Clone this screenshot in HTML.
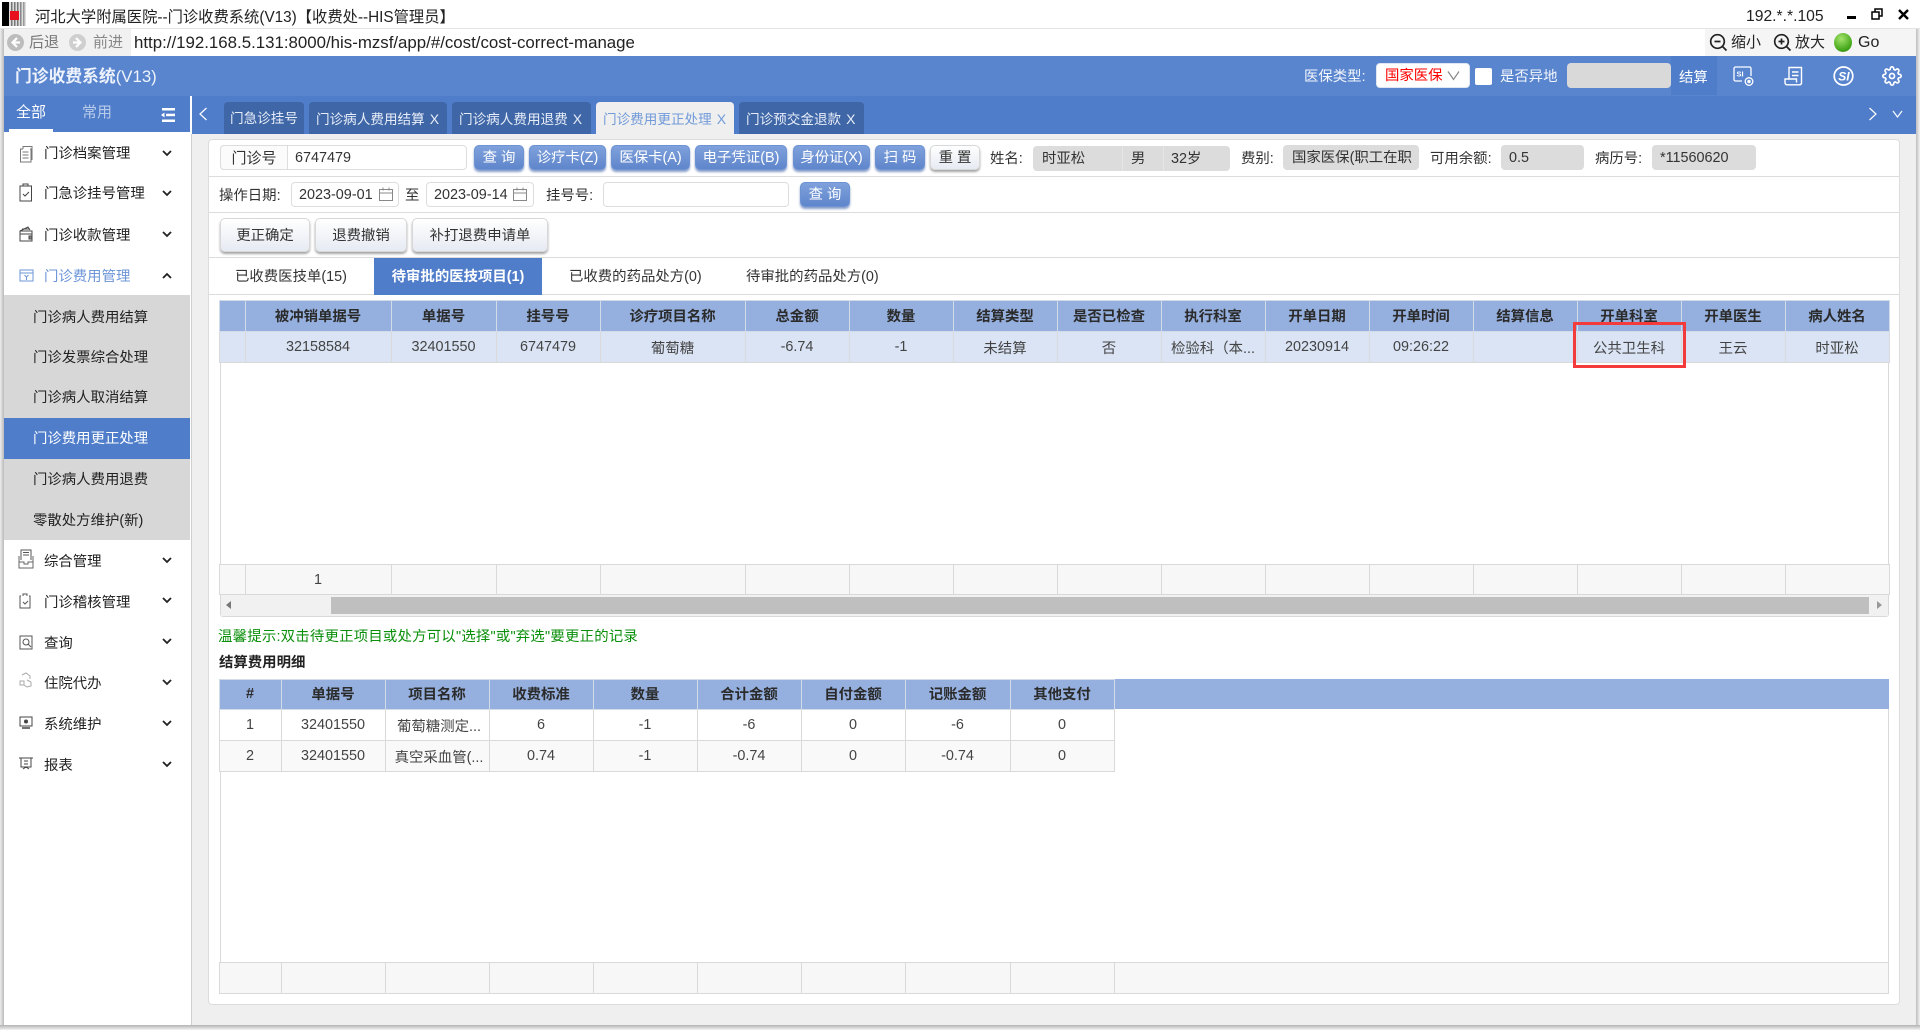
<!DOCTYPE html>
<html lang="zh-CN"><head><meta charset="utf-8"><title>门诊收费系统</title>
<style>
html,body{margin:0;padding:0;width:1920px;height:1030px;overflow:hidden;background:#fff}
body{position:relative;font-family:"Liberation Sans","Noto Sans CJK SC",sans-serif;font-size:14.4px;color:#333}
.a{position:absolute;white-space:nowrap;box-sizing:border-box}
.t{position:absolute;white-space:nowrap;height:20px;line-height:20px}
.m{color:#222}
.tab{position:absolute;top:102px;height:32px;background:#3f66a6;border-radius:4px 4px 0 0;color:#e8eef9;font-size:13.6px;line-height:34px;padding-left:7px;white-space:nowrap;box-sizing:border-box}
.tab i{font-style:normal;margin-left:5px;font-size:14px}
.btn{position:absolute;top:145px;height:25px;border-radius:5px;background:linear-gradient(#7fa1dc,#5f86cb);box-shadow:0 2px 2px rgba(70,105,170,.65);color:#fff;text-align:center;line-height:25px;white-space:nowrap;font-size:14.4px;border:1px solid #6d93d4;box-sizing:border-box}
.wbtn{position:absolute;top:145px;height:25px;border-radius:5px;background:linear-gradient(#fff,#e6eaf2);box-shadow:0 2px 2px rgba(90,90,90,.55);color:#333;text-align:center;line-height:25px;white-space:nowrap;border:1px solid #d8d8d8;box-sizing:border-box}
.inp{position:absolute;background:#fff;border:1px solid #ddd;border-radius:4px;box-sizing:border-box;height:25px;line-height:25px;white-space:nowrap}
.gray{position:absolute;background:#dcdcdc;border-radius:4px;height:25px;top:146px;line-height:26px;white-space:nowrap;box-sizing:border-box;overflow:hidden}
.hl{position:absolute;left:208px;width:1692px;height:1px;background:#dcdcdc}
table{position:absolute;border-collapse:collapse;table-layout:fixed}
td,th{border:1px solid #d9d9d9;padding:0 1px 0 0;text-align:center;overflow:hidden;white-space:nowrap;font-size:14.4px;box-sizing:border-box;color:#444;font-weight:normal}
th{background:#95b0df;color:#2b2b2b;font-weight:700;border-color:#d3dbe9;padding-bottom:2px}
td.p{padding-left:3px;padding-right:0}
</style></head><body>

<!-- window title bar -->
<svg class="a" style="left:2px;top:2px;width:24px;height:24px" viewBox="0 0 24 24"><rect width="24" height="24" fill="#ddd"/><rect x="0" width="7" height="24" fill="#000"/><rect x="9" width="1.5" height="24" fill="#777"/><rect x="12" width="1.5" height="24" fill="#777"/><rect x="15" width="1.5" height="24" fill="#777"/><rect x="18" width="1.5" height="24" fill="#888"/><rect x="21" width="1.5" height="24" fill="#999"/><rect x="8" y="9" width="9" height="9" fill="#e8101c"/></svg>
<div class="t" style="left:35px;top:8px;font-size:15.3px;color:#222">河北大学附属医院--门诊收费系统(V13)【收费处--HIS管理员】</div>
<div class="t" style="left:1746px;top:7px;font-size:15.7px;color:#222">192.*.*.105</div>
<div class="a" style="left:1847px;top:16px;width:9px;height:3px;background:#000"></div>
<svg class="a" style="left:1871px;top:8px;width:12px;height:12px" viewBox="0 0 12 12" fill="none" stroke="#000" stroke-width="1.5"><rect x="1" y="4" width="7" height="7"/><path d="M4 4V1h7v7H8"/></svg>
<svg class="a" style="left:1898px;top:9px;width:11px;height:11px" viewBox="0 0 11 11" stroke="#000" stroke-width="2.4"><path d="M1 1l9 9M10 1l-9 9"/></svg>
<div class="a" style="left:0;top:28px;width:1920px;height:1px;background:#e4e4e4"></div>

<!-- address bar -->
<div class="a" style="left:4px;top:29px;width:127px;height:27px;background:#f1f1f1"></div>
<div class="a" style="left:1705px;top:29px;width:211px;height:27px;background:#f5f5f5"></div>
<svg class="a" style="left:6px;top:33px;width:19px;height:19px" viewBox="0 0 19 19"><circle cx="9.5" cy="9.5" r="8.5" fill="#bdbdbd"/><path d="M11 5L6.5 9.5 11 14" fill="none" stroke="#fff" stroke-width="2.2"/><path d="M7 9.5h7" stroke="#fff" stroke-width="2.2"/></svg>
<div class="t" style="left:29px;top:33px;font-size:15px;color:#777">后退</div>
<svg class="a" style="left:68px;top:33px;width:19px;height:19px" viewBox="0 0 19 19"><circle cx="9.5" cy="9.5" r="8.5" fill="#cfcfcf"/><path d="M8 5l4.5 4.5L8 14" fill="none" stroke="#fff" stroke-width="2.2"/><path d="M12 9.5H5" stroke="#fff" stroke-width="2.2"/></svg>
<div class="t" style="left:93px;top:33px;font-size:15px;color:#888">前进</div>
<div class="t" style="left:134px;top:33px;font-size:16.85px;color:#222">http://192.168.5.131:8000/his-mzsf/app/#/cost/cost-correct-manage</div>
<svg class="a" style="left:1709px;top:33px;width:19px;height:19px" viewBox="0 0 19 19" fill="none" stroke="#222" stroke-width="1.7"><circle cx="8.5" cy="8.5" r="6.8"/><path d="M13.5 13.5l4 4M5.5 8.5h6"/></svg>
<div class="t" style="left:1731px;top:33px;font-size:15px;color:#222">缩小</div>
<svg class="a" style="left:1773px;top:33px;width:19px;height:19px" viewBox="0 0 19 19" fill="none" stroke="#222" stroke-width="1.7"><circle cx="8.5" cy="8.5" r="6.8"/><path d="M13.5 13.5l4 4M5.5 8.5h6M8.5 5.500v6"/></svg>
<div class="t" style="left:1795px;top:33px;font-size:15px;color:#222">放大</div>
<div class="a" style="left:1834px;top:33px;width:18px;height:19px;border-radius:50%;background:radial-gradient(circle at 40% 30%,#a4e36c,#46a81c 65%,#2f7a10)"></div>
<div class="t" style="left:1858px;top:33px;font-size:16px;color:#222">Go</div>

<!-- window edges -->
<div class="a" style="left:0;top:29px;width:4px;height:1001px;background:linear-gradient(90deg,#eee,#b9b9b9)"></div>
<div class="a" style="left:1916px;top:29px;width:4px;height:1001px;background:linear-gradient(90deg,#bdbdbd,#f3f3f3)"></div>
<div class="a" style="left:0;top:1025px;width:1920px;height:5px;background:linear-gradient(#b3b3b3,#f3f3f3)"></div>

<!-- top blue header -->
<div class="a" style="left:4px;top:56px;width:1912px;height:40px;background:#5985cf"></div>
<div class="t" style="left:15px;top:67px;font-size:16.8px;font-weight:700;color:#eef3fb">门诊收费系统<span style="font-weight:400">(V13)</span></div>
<div class="t" style="left:1304px;top:67px;color:#f2f5fb">医保类型:</div>
<div class="a" style="left:1376px;top:63px;width:94px;height:25px;background:#fff;border-radius:4px;border:1px solid #dfe6f2"></div>
<div class="t" style="left:1385px;top:66px;color:#f00">国家医保</div>
<svg class="a" style="left:1447px;top:70px;width:13px;height:11px" viewBox="0 0 13 11" fill="none" stroke="#888" stroke-width="1.2"><path d="M1 1.5l5.5 8 5.5-8"/></svg>
<div class="a" style="left:1475px;top:68px;width:17px;height:17px;background:#fff;border-radius:2px"></div>
<div class="t" style="left:1500px;top:67px;color:#f2f5fb">是否异地</div>
<div class="a" style="left:1567px;top:63px;width:104px;height:25px;background:#d9d9d9;border-radius:4px"></div>
<div class="a" style="left:1671px;top:56px;width:46px;height:39px;background:#4f7dca"></div>
<div class="t" style="left:1679px;top:68px;color:#fff">结算</div>
<svg class="a" style="left:1733px;top:66px;width:21px;height:20px" viewBox="0 0 21 20" fill="none" stroke="#fff" stroke-width="1.3"><path d="M9 15H2.500a1.500 1.500 0 0 1-1.500-1.500V2.500A1.500 1.500 0 0 1 2.500 1h14A1.500 1.500 0 0 1 18 2.500V10"/><circle cx="16" cy="15.500" r="3.800"/><circle cx="16" cy="15.500" r="1.100" fill="#fff"/><text x="3.500" y="10.500" font-size="7.500" font-weight="700" fill="#fff" stroke="none" font-family="Liberation Sans">SI</text></svg>
<svg class="a" style="left:1784px;top:66px;width:19px;height:20px" viewBox="0 0 19 20" fill="none" stroke="#fff" stroke-width="1.400"><path d="M5 13V1.500h12.500V17a2 2 0 0 1-2 1.800H3a2 2 0 0 1-2-2.200V13h11.500v3.500"/><path d="M8 6h6.500M8 9.500h6.500"/></svg>
<svg class="a" style="left:1833px;top:66px;width:21px;height:20px" viewBox="0 0 21 20" fill="none" stroke="#fff" stroke-width="1.700"><ellipse cx="10.500" cy="10" rx="9.300" ry="9"/><text x="5.300" y="14.500" font-size="12" font-weight="700" font-style="italic" fill="#fff" stroke="none" font-family="Liberation Sans">SI</text></svg>
<svg class="a" style="left:1882px;top:66px;width:20px;height:20px" viewBox="0 0 24 24" fill="none" stroke="#fff" stroke-width="2" stroke-linejoin="round"><path d="M12 15a3 3 0 1 0 0-6 3 3 0 0 0 0 6z"/><path d="M19.400 15a1.650 1.650 0 0 0 .33 1.820l.06.06a2 2 0 0 1 0 2.830 2 2 0 0 1-2.830 0l-.06-.06a1.650 1.650 0 0 0-1.820-.33 1.650 1.650 0 0 0-1 1.510V21a2 2 0 0 1-2 2 2 2 0 0 1-2-2v-.09A1.650 1.650 0 0 0 9 19.400a1.650 1.650 0 0 0-1.820.33l-.06.06a2 2 0 0 1-2.830 0 2 2 0 0 1 0-2.830l.06-.06a1.650 1.650 0 0 0 .33-1.820 1.650 1.650 0 0 0-1.510-1H3a2 2 0 0 1-2-2 2 2 0 0 1 2-2h.09A1.650 1.650 0 0 0 4.600 9a1.650 1.650 0 0 0-.33-1.820l-.06-.06a2 2 0 0 1 0-2.830 2 2 0 0 1 2.830 0l.06.06a1.650 1.650 0 0 0 1.820.33H9a1.650 1.650 0 0 0 1-1.510V3a2 2 0 0 1 2-2 2 2 0 0 1 2 2v.09a1.650 1.650 0 0 0 1 1.510 1.650 1.650 0 0 0 1.820-.33l.06-.06a2 2 0 0 1 2.830 0 2 2 0 0 1 0 2.830l-.06.06a1.650 1.650 0 0 0-.33 1.820V9a1.650 1.650 0 0 0 1.510 1H21a2 2 0 0 1 2 2 2 2 0 0 1-2 2h-.09a1.650 1.650 0 0 0-1.510 1z"/></svg>

<!-- tab strip -->
<div class="a" style="left:192px;top:96px;width:1724px;height:38px;background:#4f7dca"></div>
<div class="a" style="left:4px;top:96px;width:186px;height:36px;background:#4f7dca"></div>
<div class="a" style="left:9px;top:129px;width:44px;height:3px;background:#fff"></div>
<div class="t" style="left:16px;top:103px;color:#fff;font-size:15px">全部</div>
<div class="t" style="left:82px;top:103px;color:#b9cbea;font-size:15px">常用</div>
<svg class="a" style="left:161px;top:108px;width:15px;height:14px" viewBox="0 0 15 14" fill="#fff"><rect x="1" y="0" width="13" height="2.500"/><rect x="5" y="5.700" width="9" height="2.500"/><rect x="1" y="11.500" width="13" height="2.500"/><path d="M0 7l3.500-2.500v5z"/></svg>
<svg class="a" style="left:198px;top:107px;width:10px;height:14px" viewBox="0 0 10 14" fill="none" stroke="#fff" stroke-width="1.200"><path d="M8.500 1L2 7l6.500 6"/></svg>
<div class="tab" style="left:224px;width:80px;padding-left:6px">门急诊挂号</div>
<div class="tab" style="left:309px;width:138px">门诊病人费用结算<i>X</i></div>
<div class="tab" style="left:452px;width:139px">门诊病人费用退费<i>X</i></div>
<div class="tab" style="left:596px;width:138px;background:#efefef;color:#709ad9">门诊费用更正处理<i>X</i></div>
<div class="tab" style="left:739px;width:125px">门诊预交金退款<i>X</i></div>
<svg class="a" style="left:1868px;top:107px;width:10px;height:14px" viewBox="0 0 10 14" fill="none" stroke="#fff" stroke-width="1.200"><path d="M1.500 1L8 7l-6.500 6"/></svg>
<svg class="a" style="left:1892px;top:110px;width:11px;height:8px" viewBox="0 0 11 8" fill="none" stroke="#fff" stroke-width="1.200"><path d="M1 1l4.500 6L10 1"/></svg>

<!-- sidebar -->
<div class="a" style="left:4px;top:132px;width:186px;height:893px;background:#fff"></div>
<div class="a" style="left:190px;top:96px;width:2px;height:38px;background:#fff"></div>
<div class="a" style="left:191px;top:134px;width:1px;height:891px;background:#cfcfcf"></div>
<div class="a" style="left:192px;top:134px;width:1724px;height:891px;background:#efefef"></div>
<div class="a" style="left:4px;top:295px;width:186px;height:245px;background:#d7d7d7"></div>
<div class="a" style="left:4px;top:418px;width:186px;height:41px;background:#4f7dca"></div>

<div class="t m" style="left:44px;top:144px">门诊档案管理</div>
<div class="t m" style="left:44px;top:184px">门急诊挂号管理</div>
<div class="t m" style="left:44px;top:226px">门诊收款管理</div>
<div class="t" style="left:44px;top:267px;color:#6c95d8">门诊费用管理</div>
<div class="t m" style="left:33px;top:308px">门诊病人费用结算</div>
<div class="t m" style="left:33px;top:348px">门诊发票综合处理</div>
<div class="t m" style="left:33px;top:388px">门诊病人取消结算</div>
<div class="t" style="left:33px;top:429px;color:#fff">门诊费用更正处理</div>
<div class="t m" style="left:33px;top:470px">门诊病人费用退费</div>
<div class="t m" style="left:33px;top:511px">零散处方维护(新)</div>
<div class="t m" style="left:44px;top:552px">综合管理</div>
<div class="t m" style="left:44px;top:593px">门诊稽核管理</div>
<div class="t m" style="left:44px;top:634px">查询</div>
<div class="t m" style="left:44px;top:674px">住院代办</div>
<div class="t m" style="left:44px;top:715px">系统维护</div>
<div class="t m" style="left:44px;top:756px">报表</div>

<svg class="a" style="left:0;top:0;width:192px;height:800px" viewBox="0 0 192 800" fill="none" stroke="#222" stroke-width="1.800">
<path d="M163 151l4 4 4-4M163 191l4 4 4-4M163 232l4 4 4-4M163 278l4-4 4 4M163 558l4 4 4-4M163 598l4 4 4-4M163 639l4 4 4-4M163 680l4 4 4-4M163 721l4 4 4-4M163 762l4 4 4-4"/>
<g stroke-width="1">
<g stroke="#777"><path d="M23 149h-2.500v13H31v-13h-1M23 149v-2.500h9V160"/><path d="M22.500 152h6M22.500 155h6M22.500 158h6"/></g>
<g stroke="#444"><rect x="20" y="186" width="11.500" height="15"/><path d="M23 186v-2h5v2M23 194l2 2 4-4"/></g>
<g stroke="#444"><rect x="20" y="231" width="12" height="10"/><path d="M20 231l8-4 2 3M22 229h7M20 234h12"/><path d="M29 236h3v3h-3z" fill="#888"/></g>
<g stroke="#6c95d8"><rect x="20" y="270" width="13" height="11"/><path d="M20 273h13M24.500 275l2 2 2-2M26.500 277v3"/></g>
<g stroke="#666"><path d="M19 556v12h14v-12M19 562h5v2h4v-2h5"/><path d="M21 560v-10h10v10M23 552.500h6M23 555h6" stroke="#555"/></g>
<g stroke="#555"><path d="M21 596h-1v12h10v-12h-1M23 596v-2h4v2M23 602l2 2 3-3"/></g>
<g stroke="#555"><rect x="20" y="636" width="12" height="13"/><circle cx="26" cy="642" r="3"/><path d="M28 644l3 3"/></g>
<g stroke="#aaa"><path d="M22 675l4-2 4 3v3M20 681h4v4h-4zM27 680l4 2v4l-4 1-3-2"/></g>
<g stroke="#444"><rect x="20" y="717" width="12" height="9"/><circle cx="26" cy="721.500" r="1.500" fill="#444"/><path d="M22 728h8" stroke-width="1.500"/></g>
<g stroke="#444"><path d="M19 758h14M21 758v9h10v-9M24 761h4M24 764h4M23 769l3-2 3 2"/></g>
</g>
</svg>

<!-- content card -->
<div class="a" style="left:208px;top:139px;width:1692px;height:866px;background:#fff;border:1px solid #dcdcdc;border-radius:4px"></div>
<div class="hl" style="top:176px"></div>
<div class="hl" style="top:212px"></div>
<div class="hl" style="top:257px"></div>
<div class="hl" style="top:294px"></div>

<!-- row 1 -->
<div class="inp" style="left:220px;top:145px;width:247px"></div>
<div class="a" style="left:220px;top:145px;width:68px;height:25px;background:#fbfbfb;border:1px solid #ddd;border-radius:4px 0 0 4px;text-align:center;line-height:25px;font-size:15px">门诊号</div>
<div class="t" style="left:295px;top:148px">6747479</div>
<div class="btn" style="left:474px;width:50px">查 询</div>
<div class="btn" style="left:529px;width:77px">诊疗卡(Z)</div>
<div class="btn" style="left:611px;width:79px">医保卡(A)</div>
<div class="btn" style="left:695px;width:92px">电子凭证(B)</div>
<div class="btn" style="left:793px;width:77px">身份证(X)</div>
<div class="btn" style="left:875px;width:50px">扫 码</div>
<div class="wbtn" style="left:930px;width:50px">重 置</div>
<div class="t" style="left:990px;top:149px">姓名:</div>
<div class="gray" style="left:1033px;width:197px"></div>
<div class="a" style="left:1122px;top:146px;width:1px;height:25px;background:#e6e6e6"></div>
<div class="a" style="left:1163px;top:146px;width:1px;height:25px;background:#e6e6e6"></div>
<div class="t" style="left:1042px;top:149px">时亚松</div>
<div class="t" style="left:1131px;top:149px">男</div>
<div class="t" style="left:1171px;top:149px">32岁</div>
<div class="t" style="left:1241px;top:149px">费别:</div>
<div class="gray" style="left:1283px;top:145px;width:136px;padding:0 0 0 9px">国家医保(职工在职</div>
<div class="t" style="left:1430px;top:149px">可用余额:</div>
<div class="gray" style="left:1501px;top:145px;width:83px;padding-left:8px">0.5</div>
<div class="t" style="left:1595px;top:149px">病历号:</div>
<div class="gray" style="left:1652px;top:145px;width:104px;padding-left:8px">*11560620</div>

<!-- row 2 -->
<div class="t" style="left:219px;top:186px">操作日期:</div>
<div class="inp" style="left:291px;top:182px;width:108px;padding-left:7px">2023-09-01</div>
<div class="t" style="left:405px;top:186px">至</div>
<div class="inp" style="left:426px;top:182px;width:108px;padding-left:7px">2023-09-14</div>
<svg class="a" style="left:379px;top:187px;width:14px;height:14px" viewBox="0 0 14 14" fill="none" stroke="#888"><path d="M.5 2.500h13v11H.5zM.5 6h13M4 .5v3M10 .5v3"/></svg>
<svg class="a" style="left:513px;top:187px;width:14px;height:14px" viewBox="0 0 14 14" fill="none" stroke="#888"><path d="M.5 2.500h13v11H.5zM.5 6h13M4 .5v3M10 .5v3"/></svg>
<div class="t" style="left:546px;top:186px">挂号号:</div>
<div class="inp" style="left:603px;top:182px;width:186px"></div>
<div class="btn" style="left:800px;top:182px;width:50px">查 询</div>

<!-- row 3 -->
<div class="wbtn" style="left:220px;top:218px;width:90px;height:34px;line-height:34px">更正确定</div>
<div class="wbtn" style="left:315px;top:218px;width:92px;height:34px;line-height:34px">退费撤销</div>
<div class="wbtn" style="left:412px;top:218px;width:136px;height:34px;line-height:34px">补打退费申请单</div>

<!-- tabs -->
<div class="t" style="left:235px;top:267px">已收费医技单(15)</div>
<div class="a" style="left:374px;top:258px;width:168px;height:37px;background:#4f7dca;color:#fff;font-weight:700;text-align:center;line-height:39px">待审批的医技项目(1)</div>
<div class="t" style="left:569px;top:267px">已收费的药品处方(0)</div>
<div class="t" style="left:746px;top:267px">待审批的药品处方(0)</div>

<!-- table 1 -->
<div class="a" style="left:220px;top:300px;width:1669px;height:317px;background:#fff;border:1px solid #d9d9d9;border-radius:3px"></div>
<table style="left:219px;top:300px;width:1670px">
<colgroup><col style="width:26px"><col style="width:146px"><col style="width:105px"><col style="width:104px"><col style="width:145px"><col style="width:104px"><col style="width:104px"><col style="width:104px"><col style="width:104px"><col style="width:104px"><col style="width:104px"><col style="width:104px"><col style="width:104px"><col style="width:104px"><col style="width:104px"><col style="width:104px"></colgroup>
<tr style="height:31px"><th></th><th>被冲销单据号</th><th>单据号</th><th>挂号号</th><th>诊疗项目名称</th><th>总金额</th><th>数量</th><th>结算类型</th><th>是否已检查</th><th>执行科室</th><th>开单日期</th><th>开单时间</th><th>结算信息</th><th>开单科室</th><th>开单医生</th><th>病人姓名</th></tr>
<tr style="height:31px;background:#dae4f5"><td></td><td>32158584</td><td>32401550</td><td>6747479</td><td>葡萄糖</td><td>-6.74</td><td>-1</td><td>未结算</td><td>否</td><td>检验科（本...</td><td>20230914</td><td>09:26:22</td><td></td><td>公共卫生科</td><td>王云</td><td>时亚松</td></tr>
</table>
<table style="left:219px;top:564px;width:1670px">
<colgroup><col style="width:26px"><col style="width:146px"><col style="width:105px"><col style="width:104px"><col style="width:145px"><col style="width:104px"><col style="width:104px"><col style="width:104px"><col style="width:104px"><col style="width:104px"><col style="width:104px"><col style="width:104px"><col style="width:104px"><col style="width:104px"><col style="width:104px"><col style="width:104px"></colgroup>
<tr style="height:30px;background:#f7f7f7"><td></td><td>1</td><td></td><td></td><td></td><td></td><td></td><td></td><td></td><td></td><td></td><td></td><td></td><td></td><td></td><td></td></tr>
</table>
<div class="a" style="left:221px;top:595px;width:1667px;height:21px;background:#f1f1f1"></div>
<div class="a" style="left:331px;top:597px;width:1538px;height:17px;background:#bfbfbf"></div>
<div class="a" style="left:226px;top:601px;width:0;height:0;border:4.500px solid transparent;border-left:0;border-right:5px solid #777"></div>
<div class="a" style="left:1877px;top:601px;width:0;height:0;border:4.500px solid transparent;border-right:0;border-left:5px solid #999"></div>
<div class="a" style="left:1573px;top:322px;width:113px;height:46px;border:3px solid #f33b3b"></div>

<!-- hint -->
<div class="t" style="left:218px;top:627px;color:#0a8f0a;letter-spacing:.22px">温馨提示:双击待更正项目或处方可以"选择"或"弃选"要更正的记录</div>
<div class="t" style="left:219px;top:653px;color:#222;font-weight:700">结算费用明细</div>

<!-- table 2 -->
<div class="a" style="left:220px;top:679px;width:1669px;height:315px;background:#fff;border:1px solid #d9d9d9;border-radius:3px"></div>
<div class="a" style="left:220px;top:679px;width:1669px;height:30px;background:#95b0df"></div>
<table style="left:219px;top:679px;width:895px">
<colgroup><col style="width:62px"><col style="width:104px"><col style="width:104px"><col style="width:104px"><col style="width:104px"><col style="width:104px"><col style="width:104px"><col style="width:105px"><col style="width:104px"></colgroup>
<tr style="height:30px"><th>#</th><th>单据号</th><th>项目名称</th><th>收费标准</th><th>数量</th><th>合计金额</th><th>自付金额</th><th>记账金额</th><th>其他支付</th></tr>
<tr style="height:31px;background:#fff"><td>1</td><td>32401550</td><td class="p">葡萄糖测定...</td><td>6</td><td>-1</td><td>-6</td><td>0</td><td>-6</td><td>0</td></tr>
<tr style="height:31px;background:#f9f9f9"><td>2</td><td>32401550</td><td class="p">真空采血管(...</td><td>0.74</td><td>-1</td><td>-0.74</td><td>0</td><td>-0.74</td><td>0</td></tr>
</table>
<table style="left:219px;top:962px;width:1670px">
<colgroup><col style="width:62px"><col style="width:104px"><col style="width:104px"><col style="width:104px"><col style="width:104px"><col style="width:104px"><col style="width:104px"><col style="width:105px"><col style="width:104px"><col></colgroup>
<tr style="height:31px;background:#f7f7f7"><td></td><td></td><td></td><td></td><td></td><td></td><td></td><td></td><td></td><td></td></tr>
</table>

</body></html>
